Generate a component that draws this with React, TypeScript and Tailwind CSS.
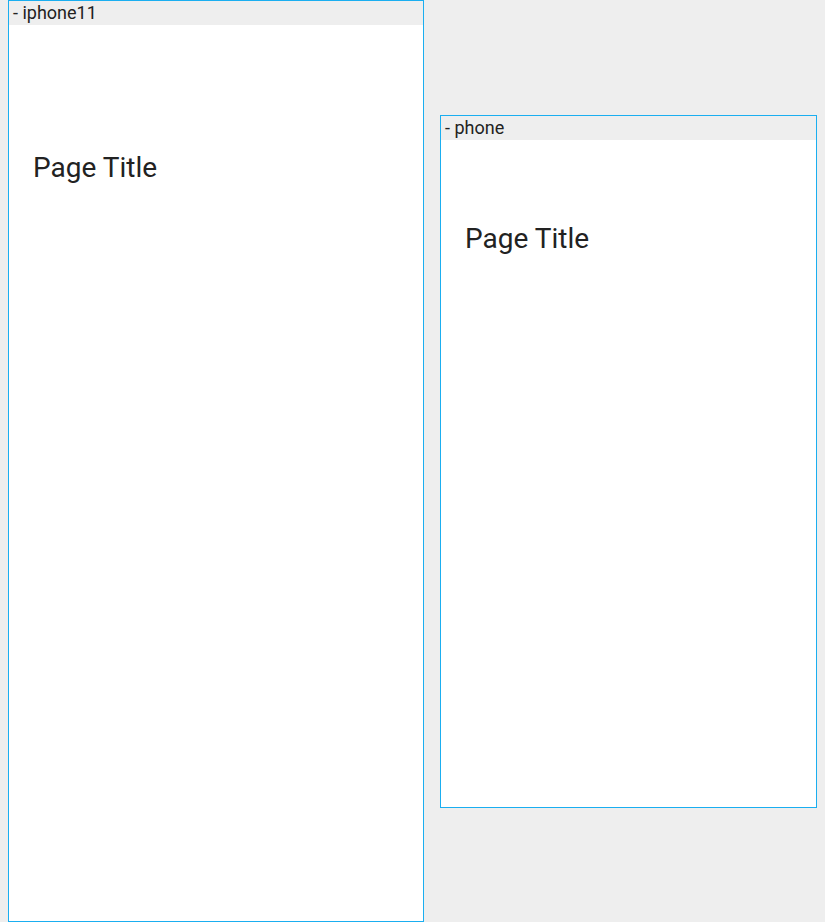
const font = { fontFamily: 'Roboto, "Liberation Sans", sans-serif' };

function DeviceFrame({
  name,
  width,
  height,
  topInset,
}: {
  name: string;
  width: string;
  height: string;
  topInset: string;
}) {
  return (
    <div className="flex flex-col border border-[#1aaef0] bg-white shrink-0">
      <div className="h-6 bg-[#eeeeee] px-1 text-lg leading-6 text-[#222]">
        - {name}
      </div>
      <div className={`${width} ${height} ${topInset} px-6`}>
        <h1 className="text-[28px] leading-[36px] text-[#222]">Page Title</h1>
      </div>
    </div>
  );
}

export default function App() {
  return (
    <div
      className="flex h-[922px] items-center gap-4 bg-[#eeeeee] pl-2"
      style={font}
    >
      <DeviceFrame name="iphone11" width="w-[414px]" height="h-[896px]" topInset="pt-[125px]" />
      <DeviceFrame name="phone" width="w-[375px]" height="h-[667px]" topInset="pt-[81px]" />
    </div>
  );
}
